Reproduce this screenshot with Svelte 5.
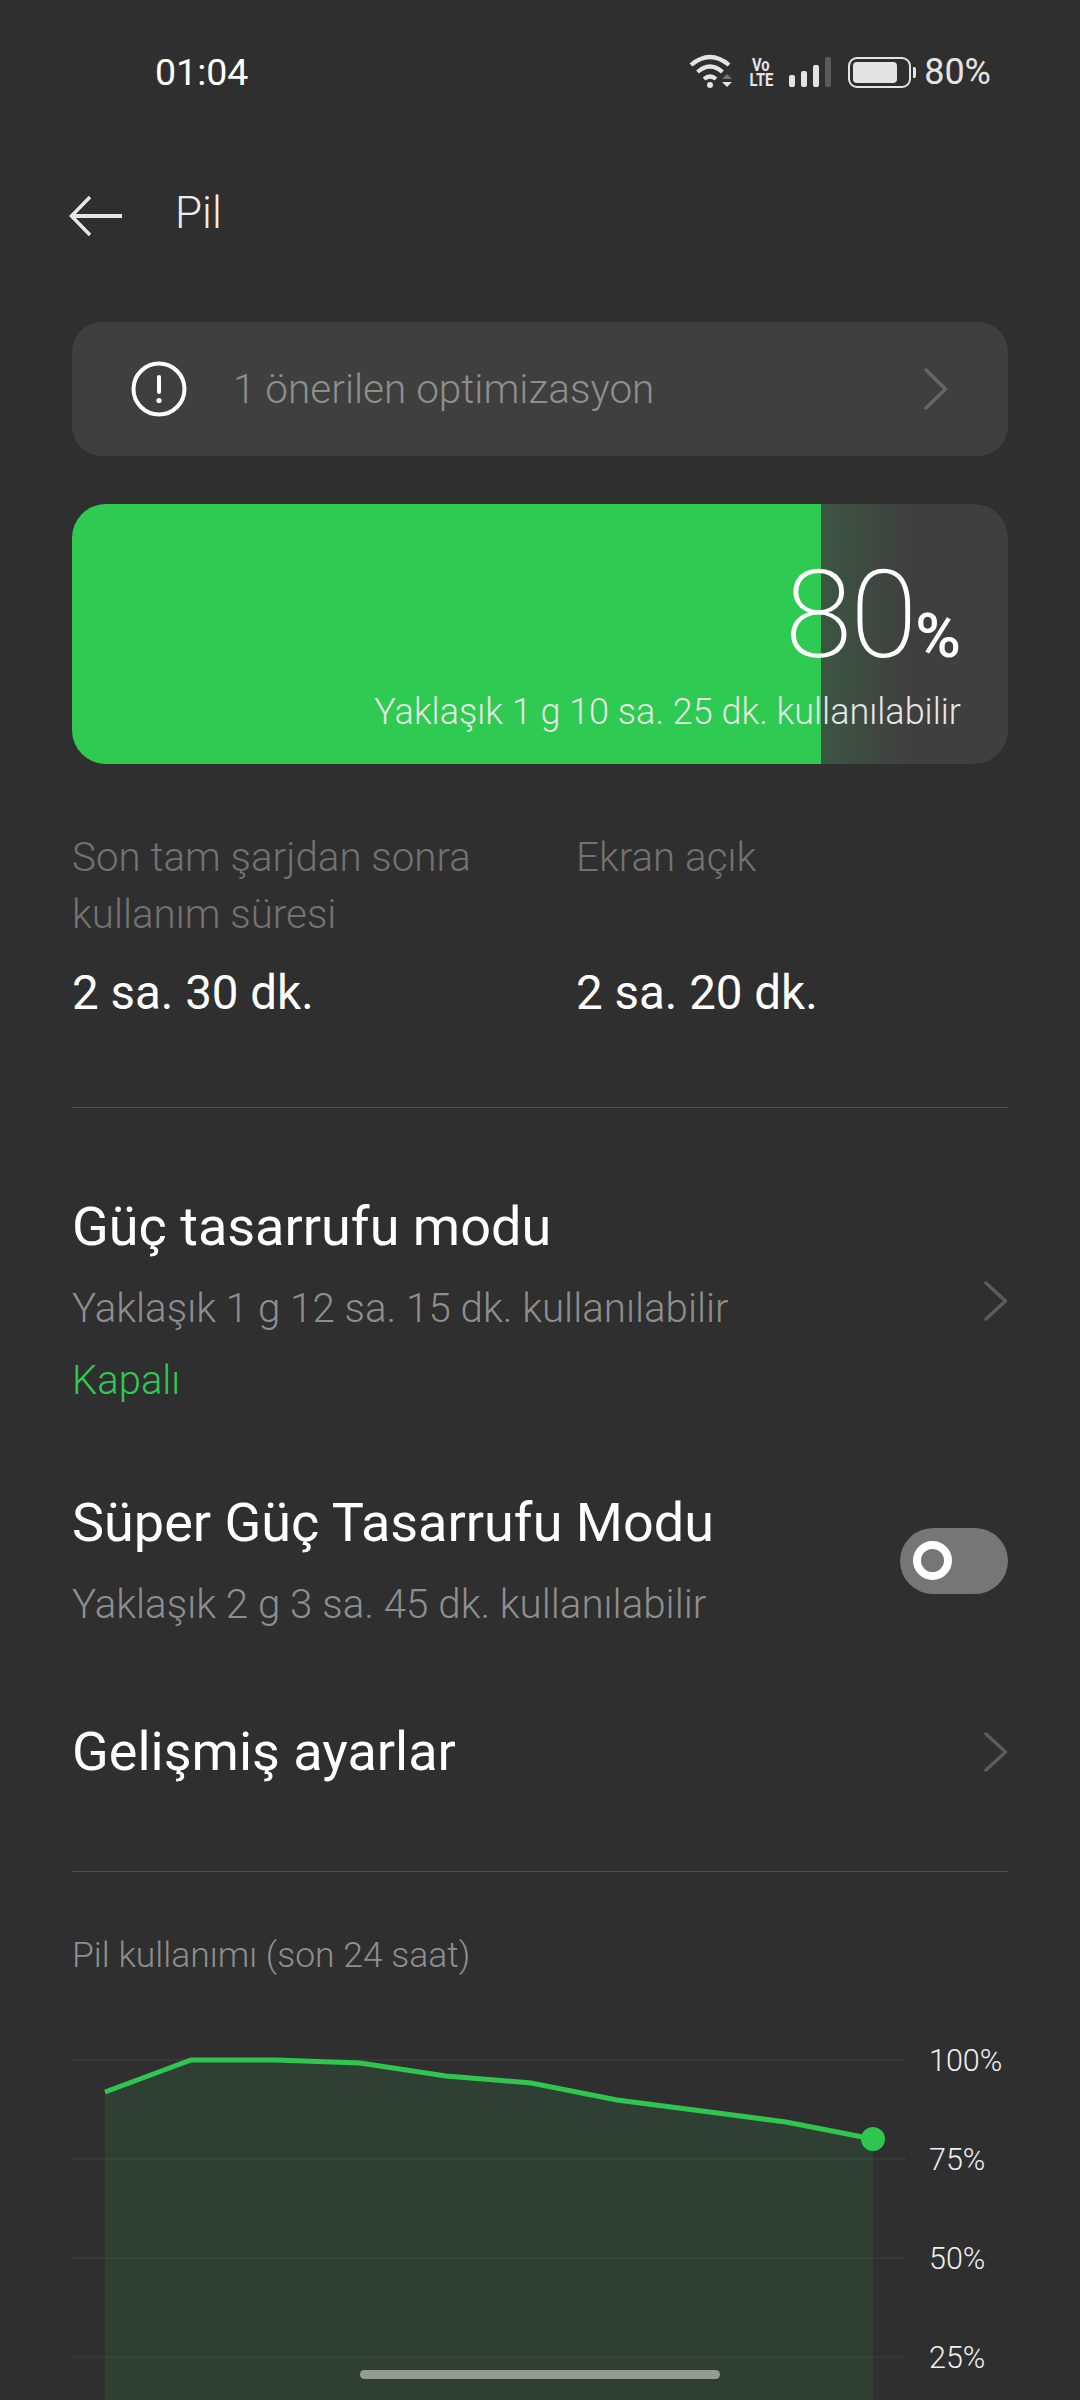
<script>
  const chartPoints = [
    [33, 32], [119, 0], [204, 0], [288, 3], [374, 16], [459, 23], [545, 40], [630, 51], [714, 62], [801, 79]
  ];
  const top = 40;
  const line = chartPoints.map(([x, y]) => `${x},${y + top}`).join(" ");
  const area = `33,${32 + top} ${line} 801,${79 + top} 801,400 33,400`;
  const grid = [0, 99, 198, 297];
  const labels = ["100%", "75%", "50%", "25%"];
</script>

<div class="screen">
  <div class="status">
    <span class="time">01:04</span>
    <div class="status-right">
      <svg class="wifi" width="44" height="36" viewBox="0 0 44 36">
        <g fill="none" stroke="#e4e4e4" stroke-width="4.2">
          <path d="M2 11 Q21 -5 40 11" />
          <path d="M8.5 18 Q21 7 33.5 18" />
          <path d="M15 25 Q21 20 27 25" />
        </g>
        <circle cx="21" cy="31" r="3" fill="#e4e4e4" />
        <path d="M33 25 L38 20 L43 25 Z" fill="#777" />
        <path d="M33 28 H43 L38 33 Z" fill="#e4e4e4" />
      </svg>
      <div class="volte"><span>Vo</span><span>LTE</span></div>
      <div class="bars">
        <i style="height:12px"></i>
        <i style="height:16px"></i>
        <i style="height:22px"></i>
        <i class="off" style="height:30px"></i>
      </div>
      <div class="battery"><div class="battery-fill"></div></div>
      <div class="nub"></div>
      <span class="status-pct">80%</span>
    </div>
  </div>

  <div class="header">
    <svg class="back" width="54" height="42" viewBox="0 0 54 42">
      <path d="M21 2 L2.500 21 L21 40" fill="none" stroke="#e6e6e6" stroke-width="3.500" />
      <path d="M53 21 H4" fill="none" stroke="#e6e6e6" stroke-width="4" />
    </svg>
    <span class="title">Pil</span>
  </div>

  <div class="tip">
    <svg width="56" height="56" viewBox="0 0 56 56">
      <circle cx="28" cy="28" r="25.500" fill="none" stroke="#fff" stroke-width="4" />
      <rect x="26" y="14" width="4" height="19" rx="2" fill="#fff" />
      <circle cx="28" cy="39.500" r="2.600" fill="#fff" />
    </svg>
    <span class="tip-text">1 önerilen optimizasyon</span>
    <svg width="24" height="42" viewBox="0 0 24 42">
      <path d="M2 2 L21.500 21 L2 40" fill="none" stroke="#666" stroke-width="3.500" stroke-linecap="round" stroke-linejoin="round" />
    </svg>
  </div>

  <div class="level">
    <div class="level-fill"></div>
    <div class="level-fade"></div>
    <div class="level-text">
      <div class="level-num">80<span>%</span></div>
      <div class="level-sub">Yaklaşık 1 g 10 sa. 25 dk. kullanılabilir</div>
    </div>
  </div>

  <div class="usage">
    <div>
      <div class="usage-label">Son tam şarjdan sonra kullanım süresi</div>
      <div class="usage-value">2 sa. 30 dk.</div>
    </div>
    <div>
      <div class="usage-label">Ekran açık<br />&nbsp;</div>
      <div class="usage-value">2 sa. 20 dk.</div>
    </div>
  </div>

  <div class="divider first"></div>

  <div class="row mode">
    <div class="row-text">
      <div class="row-title">Güç tasarrufu modu</div>
      <div class="row-sub">Yaklaşık 1 g 12 sa. 15 dk. kullanılabilir</div>
      <div class="row-state">Kapalı</div>
    </div>
    <svg class="chevron" width="24" height="42" viewBox="0 0 24 42">
      <path d="M2 3 L21.500 21 L2 39" fill="none" stroke="#5c5c5c" stroke-width="3.500" stroke-linecap="round" stroke-linejoin="round" />
    </svg>
  </div>

  <div class="row super">
    <div class="row-text">
      <div class="row-title">Süper Güç Tasarrufu Modu</div>
      <div class="row-sub">Yaklaşık 2 g 3 sa. 45 dk. kullanılabilir</div>
    </div>
    <div class="toggle"><div class="knob"></div></div>
  </div>

  <div class="row advanced">
    <div class="row-title">Gelişmiş ayarlar</div>
    <svg class="chevron" width="24" height="42" viewBox="0 0 24 42">
      <path d="M2 3 L21.500 21 L2 39" fill="none" stroke="#5c5c5c" stroke-width="3.500" stroke-linecap="round" stroke-linejoin="round" />
    </svg>
  </div>

  <div class="divider"></div>

  <div class="chart-title">Pil kullanımı (son 24 saat)</div>

  <div class="chart">
    <svg width="834" height="400" viewBox="0 0 834 400">
      <polygon points={area} fill="#2f3f34" />
      {#each grid as y}
        <line x1="0" x2="834" y1={y + top} y2={y + top} stroke="#fff" stroke-opacity="0.04" stroke-width="2" />
      {/each}
      <polyline points={line} fill="none" stroke="#2fc64f" stroke-width="5" />
      <circle cx="801" cy={79 + top} r="12" fill="#2fc64f" />
    </svg>
    <div class="axis">
      {#each labels as label}
        <div class="axis-label">{label}</div>
      {/each}
    </div>
  </div>

  <div class="home"></div>
</div>

<style>
  :global(body) {
    margin: 0;
    background: #2f2f2f;
  }

  .screen {
    position: relative;
    width: 1080px;
    height: 2400px;
    overflow: hidden;
    background: #2f2f2f;
    font-family: Roboto, "Noto Sans", sans-serif;
    font-weight: 300;
    color: #fff;
  }

  .status {
    display: flex;
    justify-content: space-between;
    align-items: center;
    height: 40px;
    padding: 52px 89px 0 155px;
  }

  .time {
    font-size: 37.500px;
    font-weight: 450;
  }

  .status-right {
    display: flex;
    align-items: center;
    color: #e4e4e4;
  }

  .wifi {
    margin-right: 17px;
  }

  .volte {
    display: flex;
    flex-direction: column;
    align-items: center;
    width: 22px;
    margin-right: 17px;
    font-size: 18px;
    line-height: 15px;
    font-weight: 700;
  }

  .volte span {
    transform: scaleX(0.82);
  }

  .bars {
    display: flex;
    align-items: flex-end;
    gap: 6px;
    margin-right: 17px;
  }

  .bars i {
    display: block;
    width: 6px;
    background: #e4e4e4;
    border-radius: 2px;
  }

  .bars i.off {
    background: #5a5a5a;
  }

  .battery {
    box-sizing: border-box;
    width: 63px;
    height: 31px;
    padding: 3px;
    border: 2px solid #e4e4e4;
    border-radius: 9px;
  }

  .battery-fill {
    width: 44px;
    height: 21px;
    background: #e4e4e4;
    border-radius: 4px;
  }

  .nub {
    width: 3px;
    height: 11px;
    margin: 0 8px 0 2px;
    background: #e4e4e4;
    border-radius: 0 2px 2px 0;
  }

  .status-pct {
    font-size: 36px;
    font-weight: 400;
  }

  .header {
    display: flex;
    align-items: center;
    gap: 52px;
    height: 50px;
    margin-top: 96px;
    padding-left: 69px;
  }

  .back {
    margin-top: 6px;
  }

  .title {
    font-size: 44px;
    font-weight: 350;
    color: #ececec;
  }

  .tip {
    display: flex;
    align-items: center;
    box-sizing: border-box;
    height: 134px;
    margin: 84px 72px 0;
    padding: 0 60px 0 59px;
    background: #3f3f3f;
    border-radius: 30px;
  }

  .tip-text {
    flex: 1;
    margin-left: 46px;
    font-size: 40.500px;
    font-weight: 350;
    color: #8e8e8e;
  }

  .level {
    position: relative;
    height: 260px;
    margin: 48px 72px 0;
    background: #3f3f3f;
    border-radius: 34px;
    overflow: hidden;
  }

  .level-fill {
    position: absolute;
    inset: 0 auto 0 0;
    width: 749px;
    background: #2fca51;
  }

  .level-fade {
    position: absolute;
    inset: 0 auto 0 749px;
    width: 90px;
    background: linear-gradient(90deg, rgba(47, 202, 81, 0.16), rgba(47, 202, 81, 0));
  }

  .level-text {
    position: relative;
    display: flex;
    flex-direction: column;
    align-items: flex-end;
    padding: 50px 47px 0 0;
  }

  .level-num {
    display: flex;
    align-items: baseline;
    height: 124px;
    font-size: 122px;
    line-height: 124px;
    font-weight: 200;
    letter-spacing: -2px;
  }

  .level-num span {
    font-size: 62px;
    font-weight: 500;
    letter-spacing: 0;
  }

  .level-sub {
    margin-top: 12px;
    font-size: 36px;
    line-height: 44px;
    font-weight: 350;
    color: #e6e6e6;
  }

  .usage {
    display: grid;
    grid-template-columns: 504px 1fr;
    margin: 65px 72px 0;
  }

  .usage-label {
    width: 420px;
    font-size: 40.300px;
    line-height: 57px;
    font-weight: 350;
    color: #727272;
  }

  .usage-value {
    margin-top: 22px;
    font-size: 47.500px;
    line-height: 56px;
    font-weight: 400;
  }

  .divider {
    height: 1px;
    margin: 0 72px;
    background: #4c4c4c;
  }

  .divider.first {
    margin-top: 86px;
  }

  .row {
    display: flex;
    justify-content: space-between;
    align-items: center;
    margin: 0 72px;
  }

  .mode {
    margin-top: 88px;
  }

  .super {
    margin-top: 87px;
  }

  .advanced {
    margin-top: 92px;
    margin-bottom: 88px;
  }

  .row-title {
    font-size: 54px;
    line-height: 62px;
    font-weight: 400;
  }

  .row-sub {
    margin-top: 27px;
    font-size: 40.300px;
    line-height: 48px;
    font-weight: 350;
    color: #8e8e8e;
  }

  .row-state {
    margin-top: 24px;
    font-size: 40px;
    line-height: 48px;
    font-weight: 350;
    color: #2fca51;
  }

  .chevron {
    flex: none;
  }

  .toggle {
    display: flex;
    align-items: center;
    box-sizing: border-box;
    width: 108px;
    height: 66px;
    padding-left: 13px;
    background: #767676;
    border-radius: 33px;
  }

  .knob {
    box-sizing: border-box;
    width: 39px;
    height: 39px;
    border: 8px solid #fff;
    border-radius: 50%;
  }

  .chart-title {
    margin: 61px 72px 0;
    font-size: 35.500px;
    line-height: 44px;
    font-weight: 350;
    color: #8e8e8e;
  }

  .chart {
    display: flex;
    margin: 43px 0 0 72px;
  }

  .chart svg {
    flex: none;
  }

  .axis {
    display: flex;
    flex-direction: column;
    margin: 19px 0 0 23px;
  }

  .axis-label {
    height: 99px;
    font-size: 30.500px;
    line-height: 44px;
    font-weight: 350;
    color: #efefef;
  }

  .home {
    position: absolute;
    left: 360px;
    top: 2370px;
    width: 360px;
    height: 9px;
    background: #949c94;
    border-radius: 5px;
  }
</style>
